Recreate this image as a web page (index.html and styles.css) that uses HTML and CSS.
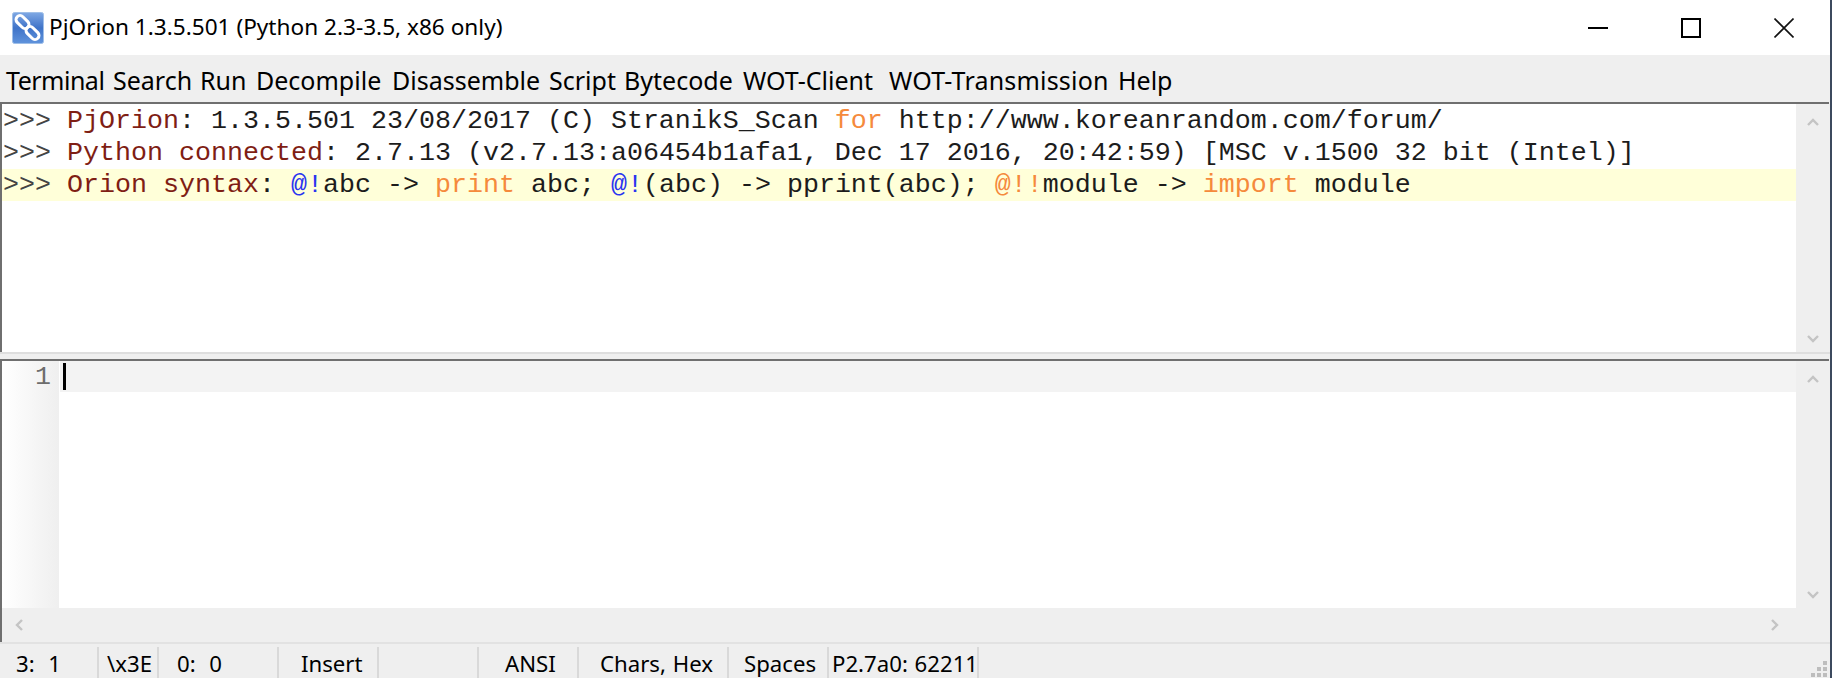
FILE: index.html
```html
<!DOCTYPE html>
<html lang="en">
<head>
<meta charset="utf-8">
<title>PjOrion</title>
<link rel="stylesheet" href="styles.css">
</head>
<body>
<div class="window">
  <header class="titlebar">
    <svg class="app-icon" viewBox="0 0 32 32" width="32" height="32">
      <defs>
        <linearGradient id="bg" x1="0" y1="0" x2="0" y2="1">
          <stop offset="0" stop-color="#7fa8e4"/>
          <stop offset="0.5" stop-color="#3f73c8"/>
          <stop offset="1" stop-color="#5f93dc"/>
        </linearGradient>
      </defs>
      <rect x="0.5" y="0.5" width="31" height="31" rx="2" fill="url(#bg)" stroke="#9fbfe8"/>
      <g fill="none" stroke="#fff" stroke-width="3">
        <rect x="3" y="6" width="15" height="8" rx="4" transform="rotate(45 10.5 10)"/>
        <rect x="13" y="17" width="15" height="8" rx="4" transform="rotate(45 20.5 21)"/>
      </g>
    </svg>
    <span class="title">PjOrion 1.3.5.501 (Python 2.3-3.5, x86 only)</span>
    <div class="controls">
      <svg class="ctl" viewBox="0 0 20 20" width="20" height="20"><path d="M0 10h20" stroke="#000" stroke-width="2"/></svg>
      <svg class="ctl" viewBox="0 0 20 20" width="20" height="20"><rect x="1" y="1" width="18" height="18" fill="none" stroke="#000" stroke-width="2"/></svg>
      <svg class="ctl" viewBox="0 0 20 20" width="20" height="20"><path d="M0.5 0.5l19 19M19.5 0.5l-19 19" stroke="#111" stroke-width="1.6"/></svg>
    </div>
  </header>

  <nav class="menubar">
    <span class="tight">Terminal</span><span>Search</span><span>Run</span><span>Decompile</span><span>Disassemble</span><span>Script</span><span>Bytecode</span><span>WOT-Client</span><span class="wide">WOT-Transmission</span><span>Help</span>
  </nav>

  <section class="pane output">
    <div class="code">
      <div class="line"><i class="p">&gt;&gt;&gt;</i> <b class="r">PjOrion</b>: 1.3.5.501 23/08/2017 (C) StranikS_Scan <b class="o">for</b> http://www.koreanrandom.com/forum/</div>
      <div class="line"><i class="p">&gt;&gt;&gt;</i> <b class="r">Python connected</b>: 2.7.13 (v2.7.13:a06454b1afa1, Dec 17 2016, 20:42:59) [MSC v.1500 32 bit (Intel)]</div>
      <div class="line hl"><i class="p">&gt;&gt;&gt;</i> <b class="r">Orion syntax</b>: <b class="b">@!</b>abc -&gt; <b class="o">print</b> abc; <b class="b">@!</b>(abc) -&gt; pprint(abc); <b class="o">@!!</b>module -&gt; <b class="o">import</b> module</div>
    </div>
    <div class="vscroll">
      <svg viewBox="0 0 12 8" width="12" height="8"><path d="M1 7l5-5 5 5" fill="none" stroke="#c4c4c4" stroke-width="2.4"/></svg>
      <svg viewBox="0 0 12 8" width="12" height="8"><path d="M1 1l5 5 5-5" fill="none" stroke="#c4c4c4" stroke-width="2.4"/></svg>
    </div>
  </section>

  <div class="splitter"></div>

  <section class="pane editor">
    <div class="gutter"><span class="num">1</span></div>
    <div class="edit">
      <div class="current"><span class="caret"></span></div>
    </div>
    <div class="vscroll">
      <svg viewBox="0 0 12 8" width="12" height="8"><path d="M1 7l5-5 5 5" fill="none" stroke="#c4c4c4" stroke-width="2.4"/></svg>
      <svg viewBox="0 0 12 8" width="12" height="8"><path d="M1 1l5 5 5-5" fill="none" stroke="#c4c4c4" stroke-width="2.4"/></svg>
    </div>
  </section>

  <div class="hscroll">
    <svg viewBox="0 0 8 12" width="8" height="12"><path d="M7 1L2 6l5 5" fill="none" stroke="#c4c4c4" stroke-width="2.4"/></svg>
    <svg viewBox="0 0 8 12" width="8" height="12"><path d="M1 1l5 5-5 5" fill="none" stroke="#c4c4c4" stroke-width="2.4"/></svg>
  </div>

  <footer class="statusbar">
    <span class="cell c1">3:&nbsp;&nbsp;1</span>
    <span class="cell c2">\x3E</span>
    <span class="cell c3">0:&nbsp;&nbsp;0</span>
    <span class="cell c4">Insert</span>
    <span class="cell c5"></span>
    <span class="cell c6">ANSI</span>
    <span class="cell c7">Chars, Hex</span>
    <span class="cell c8">Spaces</span>
    <span class="cell c9">P2.7a0: 62211</span>
    <svg class="grip" viewBox="0 0 16 16" width="16" height="16">
      <path d="M12 0h4v4h-4zM6 6h4v4H6zM12 6h4v4h-4zM0 12h4v4H0zM6 12h4v4H6zM12 12h4v4h-4z" fill="#bdbdbd"/>
    </svg>
  </footer>
</div>
</body>
</html>
```
FILE: styles.css
```css
* { box-sizing: border-box; }
html, body { margin: 0; padding: 0; height: 100%; background: #fff; }
body { overflow: hidden; }

.window {
  width: 1832px;
  height: 678px;
  display: flex;
  flex-direction: column;
  border-right: 2px solid #3c4a5e;
  font-family: "Noto Sans", "Open Sans", sans-serif;
  color: #000;
  background: #efefef;
}

.titlebar {
  height: 55px;
  flex: none;
  display: flex;
  align-items: center;
  background: #fff;
  padding-left: 12px;
}
.app-icon { flex: none; }
.title { margin: 0 0 2px 5px; font-size: 22.6px; white-space: nowrap; }
.controls {
  margin-left: auto;
  display: flex;
  gap: 73px;
  padding-right: 36px;
}

.menubar {
  height: 47px;
  flex: none;
  display: grid;
  grid-template-columns: 107px 87px 56px 136px 157px 75px 119px 146px 229px auto;
  justify-content: start;
  align-items: center;
  padding: 3px 0 0 6px;
  font-size: 25px;
  background: #efefef;
  white-space: nowrap;
}
.tight { letter-spacing: -0.5px; }
.wide { letter-spacing: 0.2px; }

.pane {
  display: flex;
  border-top: 2px solid #6f6f6f;
  border-left: 2px solid #6f6f6f;
  margin-right: 1px;
  background: #fff;
}
.output { height: 250px; flex: none; }
.editor { height: 249px; flex: none; }

.code {
  flex: 1;
  min-width: 0;
  padding-top: 1px;
  font-family: "Liberation Mono", monospace;
  font-size: 26.67px;
  color: #1c1c1c;
}
.line { height: 32px; line-height: 32px; white-space: pre; padding-left: 1px; }
.hl { background: #ffffd9; }
.code i, .code b { font-style: normal; font-weight: 400; }
.p { color: #444; }
.r { color: #7f1e14; }
.o { color: #f58a3c; }
.b { color: #2a35f0; }

.vscroll {
  width: 33px;
  flex: none;
  background: #efefef;
  display: flex;
  flex-direction: column;
  justify-content: space-between;
  align-items: center;
  padding: 14px 0 9px;
}

.splitter {
  height: 7px;
  flex: none;
  background: #efefef;
  border-top: 2px solid #dedede;
}

.gutter {
  width: 57px;
  flex: none;
  background: linear-gradient(to right, #fff, #efefef);
  text-align: right;
  padding: 0 8px 0 0;
  font-family: "Liberation Mono", monospace;
  font-size: 26.67px;
  line-height: 32px;
  color: #6d6d6d;
}
.num { display: block; }
.edit { flex: 1; min-width: 0; background: #fff; border-left: 1px solid #fff; }
.current {
  height: 31px;
  background: #f3f3f3;
  padding: 2px 0 0 3px;
}
.caret { display: block; width: 3px; height: 27px; background: #000; }

.hscroll {
  height: 34px;
  flex: none;
  display: flex;
  align-items: center;
  justify-content: space-between;
  padding: 0 51px 0 13px;
  background: #efefef;
  border-left: 2px solid #6f6f6f;
}

.statusbar {
  height: 37px;
  flex: none;
  display: flex;
  align-items: stretch;
  padding: 3px 0 1px;
  border-top: 2px solid #e2e2e2;
  font-size: 22.2px;
  line-height: 33px;
  background: #efefef;
  position: relative;
  white-space: nowrap;
}
.cell { border-right: 2px solid #d9d9d9; flex: none; word-spacing: 1px; }
.c1 { width: 99px; padding-left: 16px; }
.c2 { width: 60px; padding-left: 8px; }
.c3 { width: 120px; padding-left: 18px; }
.c4 { width: 100px; padding-left: 22px; }
.c5 { width: 100px; }
.c6 { width: 100px; padding-left: 26px; }
.c7 { width: 150px; padding-left: 21px; }
.c8 { width: 100px; padding-left: 15px; }
.c9 { width: 150px; padding-left: 3px; }
.grip { position: absolute; right: 3px; bottom: 2px; }
```
